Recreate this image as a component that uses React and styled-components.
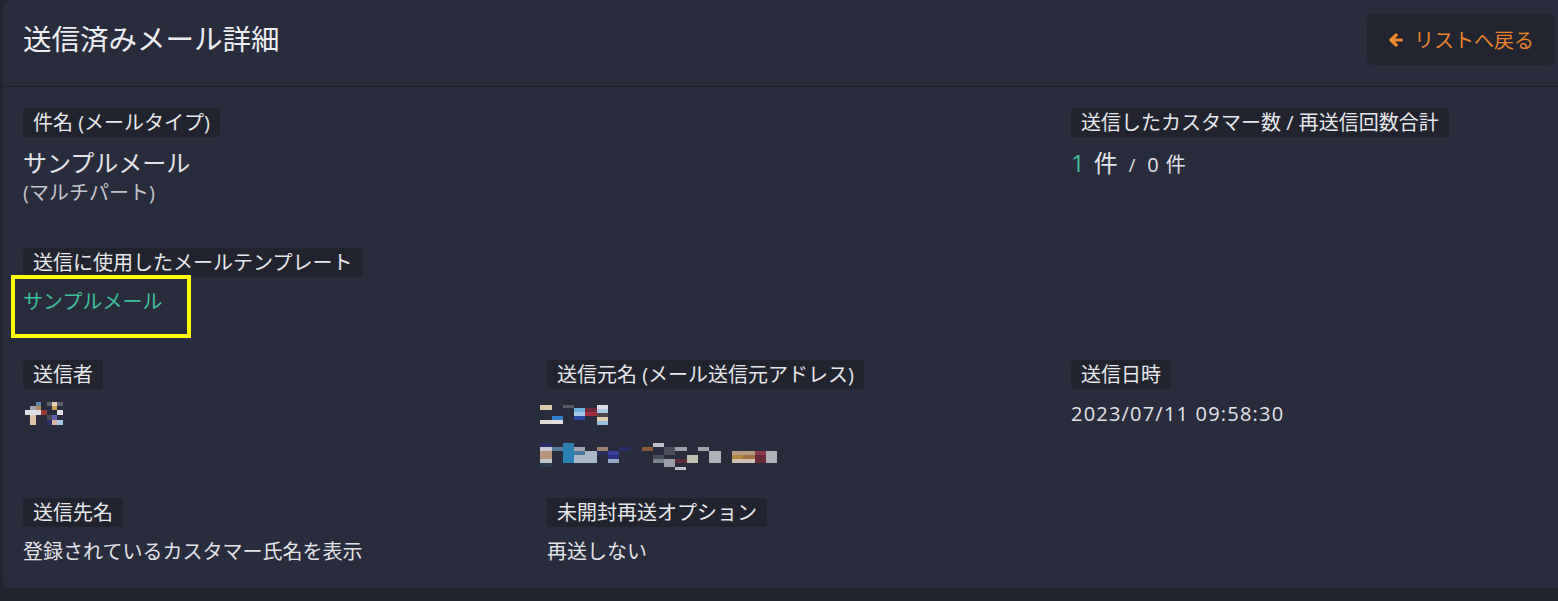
import React from "react";
import styled, { createGlobalStyle } from "styled-components";

const GlobalStyle = createGlobalStyle`
  html, body {
    margin: 0;
    padding: 0;
    background: #21232e;
    overflow: hidden;
    font-family: "Open Sans", "Noto Sans CJK JP", sans-serif;
    color: #e2e3e8;
  }
`;

const Page = styled.div`
  width: 1558px;
  height: 601px;
  overflow: hidden;
  background: #21232e;
`;

const Card = styled.section`
  margin-left: 3px;
  width: 1571px;
  background: #292c3d;
  border-radius: 8px;
`;

const Header = styled.header`
  height: 86px;
  display: flex;
  align-items: center;
  justify-content: space-between;
  padding: 0 20px;
  border-bottom: 1px solid #1f212b;
`;

const Title = styled.h1`
  margin: 0 0 8px;
  font-size: 28.5px;
  font-weight: 400;
  line-height: 1;
  color: #eceef2;
`;

const BackButton = styled.button`
  height: 51px;
  margin-top: -7px;
  display: flex;
  align-items: center;
  gap: 11px;
  padding: 0 20px 0 22px;
  background: #22252f;
  border: none;
  border-radius: 6px;
  color: #e8812c;
  font-family: inherit;
  font-size: 20px;
  cursor: pointer;
`;

const ArrowIcon = styled.svg`
  width: 14px;
  height: 14px;
  flex: none;
`;

const Body = styled.div`
  padding: 21px 20px 21px;
`;

const Row = styled.div`
  display: grid;
  grid-template-columns: repeat(3, 483px);
  column-gap: 41px;
  margin-bottom: ${(p) => p.$mb || 0}px;
`;

const Field = styled.div`
  display: flex;
  flex-direction: column;
  align-items: flex-start;
  position: relative;
`;

const Label = styled.span`
  display: inline-block;
  height: 29px;
  line-height: 29px;
  padding: 0 10px;
  margin-bottom: 10px;
  background: #21242f;
  border-radius: 3px;
  font-size: 20px;
  color: #e6e7eb;
  white-space: nowrap;
`;

const Value = styled.div`
  font-size: ${(p) => p.$size || 20}px;
  line-height: ${(p) => p.$lh || 30}px;
  letter-spacing: ${(p) => p.$ls || 0}px;
  color: ${(p) => p.$color || "#e2e3e8"};
  margin-top: ${(p) => p.$mt || 0}px;
  white-space: nowrap;
`;

const Link = styled.a`
  font-size: 20px;
  line-height: 30px;
  color: #3dbf9b;
  text-decoration: none;
`;

const Highlight = styled.div`
  position: absolute;
  left: -12px;
  top: 27px;
  width: 180px;
  height: 63px;
  box-sizing: border-box;
  border: 4px solid #ffff00;
  pointer-events: none;
`;

const Count = styled.div`
  display: flex;
  align-items: baseline;
  color: #e2e3e8;
  line-height: 31px;
  height: 31px;
`;

const Num = styled.span`
  font-size: ${(p) => p.$size}px;
  color: ${(p) => p.$color || "#e2e3e8"};
  margin-right: ${(p) => p.$mr || 0}px;
`;

const MosaicSvg = styled.svg`
  display: block;
  overflow: visible;
`;

function Mosaic({ ox, oy, w, h, cells }) {
  return (
    <MosaicSvg width={w} height={h} viewBox={`0 0 ${w} ${h}`}>
      {cells.map(([x, y, cw, ch, c], i) => (
        <rect key={i} x={x - ox} y={y - oy} width={cw} height={ch} fill={c} />
      ))}
    </MosaicSvg>
  );
}

const senderCells = [
  [36, 402, 5, 4, "#5f87a8"],
  [47, 402, 5, 4, "#5a5d6b"],
  [52, 402, 5, 4, "#e6cdb8"],
  [57, 402, 6, 4, "#5a5d6b"],
  [30, 406, 6, 4, "#a0a4ad"],
  [36, 406, 5, 4, "#b08a5e"],
  [52, 406, 5, 4, "#c9a050"],
  [25, 410, 16, 5, "#dcdde4"],
  [41, 410, 6, 5, "#9a3a35"],
  [57, 410, 6, 5, "#dcdde4"],
  [30, 415, 6, 5, "#e0c3a8"],
  [47, 415, 5, 5, "#4a4c5a"],
  [52, 415, 5, 5, "#6560b0"],
  [30, 420, 6, 5, "#e0c3a8"],
  [47, 420, 5, 5, "#2d2f6d"],
  [52, 420, 5, 5, "#d8b8a0"],
  [57, 420, 6, 5, "#a5c5e5"],
];

const nameCells = [
  [540, 405, 12, 5, "#d8cbaa"],
  [563, 405, 11, 3, "#585b67"],
  [597, 405, 11, 4, "#dcdde4"],
  [574, 408, 11, 4, "#72b0e0"],
  [585, 408, 12, 4, "#6e2a3a"],
  [597, 409, 11, 4, "#a8c8e0"],
  [574, 412, 11, 4, "#a8c8e8"],
  [585, 412, 12, 4, "#a03040"],
  [597, 413, 11, 4, "#4a4548"],
  [574, 416, 11, 4, "#2a4aa8"],
  [597, 417, 11, 4, "#e0d0b0"],
  [552, 416, 11, 4, "#2f7ec8"],
  [540, 420, 12, 4, "#e0dbd6"],
  [552, 420, 11, 4, "#e0e0e0"],
  [597, 421, 11, 4, "#98c0e0"],
];

const addressCells = [
  [540, 443, 12, 4, "#2a2c6a"],
  [563, 443, 11, 4, "#2a80b0"],
  [540, 447, 12, 4, "#c8c8d0"],
  [552, 447, 11, 4, "#5a7a9a"],
  [563, 447, 11, 16, "#2a80b0"],
  [574, 447, 11, 4, "#a0a4b0"],
  [574, 451, 11, 4, "#4a7aa0"],
  [574, 455, 11, 8, "#a8b8c8"],
  [585, 451, 12, 12, "#a8b8c8"],
  [597, 447, 11, 4, "#9a8070"],
  [597, 451, 11, 4, "#2a2c5a"],
  [608, 451, 11, 4, "#3a3f9a"],
  [608, 455, 11, 4, "#2a3080"],
  [608, 459, 11, 4, "#90a8c0"],
  [619, 447, 12, 4, "#2a2c6a"],
  [540, 451, 12, 8, "#b8957a"],
  [540, 459, 12, 4, "#c0c4c8"],
  [540, 463, 12, 4, "#2a3a50"],
  [642, 447, 11, 4, "#8a5a3a"],
  [653, 443, 11, 4, "#c0c0c8"],
  [664, 447, 11, 8, "#4a4d5a"],
  [675, 447, 12, 4, "#9aa0a8"],
  [653, 455, 11, 4, "#4a4d5a"],
  [653, 459, 11, 4, "#7a8490"],
  [664, 459, 11, 8, "#9a9ca8"],
  [675, 459, 12, 4, "#5a2a3a"],
  [687, 455, 11, 8, "#c0c0b0"],
  [675, 467, 11, 3, "#c0c0c8"],
  [698, 447, 11, 4, "#a0a4a8"],
  [709, 451, 12, 12, "#b0b0b8"],
  [732, 451, 11, 4, "#b89a80"],
  [732, 455, 11, 4, "#b08a3a"],
  [732, 459, 11, 4, "#d0c0b0"],
  [743, 451, 12, 4, "#b89a80"],
  [743, 455, 12, 4, "#a07040"],
  [743, 459, 12, 4, "#d0c0b8"],
  [755, 451, 11, 4, "#8a3a48"],
  [755, 455, 11, 8, "#6a2a38"],
  [766, 451, 11, 12, "#b0b0b8"],
];

export default function App() {
  return (
    <Page>
      <GlobalStyle />
      <Card>
        <Header>
          <Title>送信済みメール詳細</Title>
          <BackButton>
            <ArrowIcon viewBox="0 0 14 14" fill="none" stroke="#f08a2e" strokeWidth="3.2" strokeLinecap="round" strokeLinejoin="round">
              <polyline points="7.2,2 2,7 7.2,12" />
              <line x1="2.5" y1="7" x2="12.4" y2="7" />
            </ArrowIcon>
            リストへ戻る
          </BackButton>
        </Header>
        <Body>
          <Row $mb={40}>
            <Field>
              <Label>件名 (メールタイプ)</Label>
              <Value $size={24} $lh={31}>サンプルメール</Value>
              <Value $color="#c2c4cb">(マルチパート)</Value>
            </Field>
            <Field />
            <Field>
              <Label>送信したカスタマー数 / 再送信回数合計</Label>
              <Count>
                <Num $size={24} $color="#3dbf9b" $mr={9}>1</Num>
                <Num $size={24} $mr={11}>件</Num>
                <Num $size={18} $mr={12}>/</Num>
                <Num $size={20} $mr={7}>0</Num>
                <Num $size={20}>件</Num>
              </Count>
            </Field>
          </Row>
          <Row $mb={43}>
            <Field>
              <Label>送信に使用したメールテンプレート</Label>
              <Link href="#">サンプルメール</Link>
              <Highlight />
            </Field>
          </Row>
          <Row $mb={28}>
            <Field>
              <Label>送信者</Label>
              <Mosaic ox={23} oy={399} w={45} h={30} cells={senderCells} />
            </Field>
            <Field>
              <Label>送信元名 (メール送信元アドレス)</Label>
              <Mosaic ox={547} oy={399} w={70} h={30} cells={nameCells} />
              <Value $mt={11}>
                <Mosaic ox={547} oy={440} w={235} h={30} cells={addressCells} />
              </Value>
            </Field>
            <Field>
              <Label>送信日時</Label>
              <Value $ls={1.2}>2023/07/11 09:58:30</Value>
            </Field>
          </Row>
          <Row>
            <Field>
              <Label>送信先名</Label>
              <Value>登録されているカスタマー氏名を表示</Value>
            </Field>
            <Field>
              <Label>未開封再送オプション</Label>
              <Value>再送しない</Value>
            </Field>
          </Row>
        </Body>
      </Card>
    </Page>
  );
}
